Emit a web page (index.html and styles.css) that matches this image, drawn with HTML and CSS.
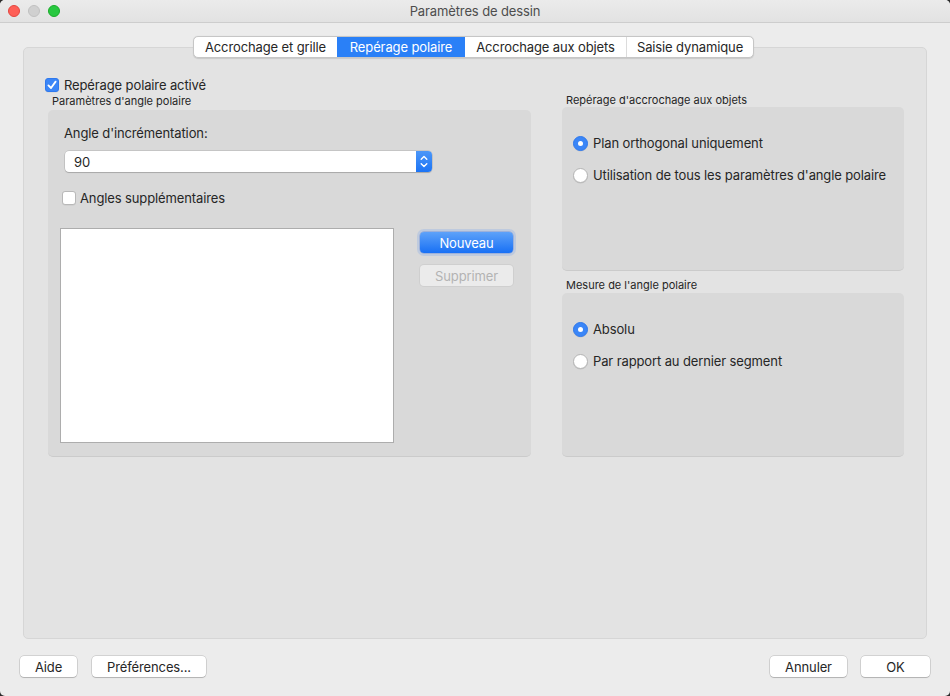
FILE: index.html
```html
<!DOCTYPE html>
<html lang="fr">
<head>
<meta charset="utf-8">
<title>Paramètres de dessin</title>
<link rel="stylesheet" href="styles.css">
</head>
<body>
<div class="window">
  <div class="titlebar">
    <div class="lights">
      <span class="light red"></span>
      <span class="light gray"></span>
      <span class="light green"></span>
    </div>
    <div class="title">Paramètres de dessin</div>
  </div>

  <div class="tabs">
    <div class="seg seg-1">Accrochage et grille</div>
    <div class="seg seg-2 active">Repérage polaire</div>
    <div class="seg seg-3">Accrochage aux objets</div>
    <div class="seg seg-4">Saisie dynamique</div>
  </div>

  <div class="tabbox">
    <label class="check-row main-check">
      <span class="checkbox checked">
        <svg viewBox="0 0 14 14" width="14" height="14"><path d="M3.4 7.4 L6 10 L10.6 3.6" fill="none" stroke="#fff" stroke-width="1.8" stroke-linecap="round" stroke-linejoin="round"/></svg>
      </span>
      <span class="check-text">Repérage polaire activé</span>
    </label>

    <div class="columns">
      <div class="col-left">
        <div class="group-label">Paramètres d'angle polaire</div>
        <div class="group group-left">
          <div class="field-label">Angle d'incrémentation:</div>
          <div class="combo">
            <span class="combo-value">90</span>
            <span class="stepper">
              <svg viewBox="0 0 16 21" width="16" height="21"><path d="M5.2 8.2 L8 5.4 L10.8 8.2" fill="none" stroke="#fff" stroke-width="1.4" stroke-linecap="round" stroke-linejoin="round"/><path d="M5.2 12.8 L8 15.6 L10.8 12.8" fill="none" stroke="#fff" stroke-width="1.4" stroke-linecap="round" stroke-linejoin="round"/></svg>
            </span>
          </div>
          <label class="check-row extra-check">
            <span class="checkbox"></span>
            <span class="check-text">Angles supplémentaires</span>
          </label>
          <div class="list-row">
            <div class="listbox"></div>
            <div class="list-buttons">
              <button class="btn btn-primary">Nouveau</button>
              <button class="btn btn-disabled" disabled>Supprimer</button>
            </div>
          </div>
        </div>
      </div>

      <div class="col-right">
        <div class="group-label">Repérage d'accrochage aux objets</div>
        <div class="group group-right">
          <label class="radio-row"><span class="radio on"></span><span>Plan orthogonal uniquement</span></label>
          <label class="radio-row"><span class="radio"></span><span>Utilisation de tous les paramètres d'angle polaire</span></label>
        </div>
        <div class="group-label label-second">Mesure de l'angle polaire</div>
        <div class="group group-right">
          <label class="radio-row"><span class="radio on"></span><span>Absolu</span></label>
          <label class="radio-row"><span class="radio"></span><span>Par rapport au dernier segment</span></label>
        </div>
      </div>
    </div>
  </div>

  <div class="footer">
    <div class="footer-left">
      <button class="btn btn-foot btn-aide">Aide</button>
      <button class="btn btn-foot btn-pref">Préférences...</button>
    </div>
    <div class="footer-right">
      <button class="btn btn-foot btn-cancel">Annuler</button>
      <button class="btn btn-foot btn-ok">OK</button>
    </div>
  </div>
</div>
</body>
</html>
```

FILE: styles.css
```css
* { box-sizing: border-box; }

html, body {
  margin: 0;
  padding: 0;
  background: #2b2b2b;
}

body {
  width: 950px;
  height: 696px;
  font-family: "Inter", "Liberation Sans", sans-serif;
  font-size: 13px;
  letter-spacing: -0.12px;
  color: #262626;
  overflow: hidden;
}

.window {
  width: 950px;
  height: 696px;
  background: #ececec;
  border-radius: 5px;
  display: flex;
  flex-direction: column;
  overflow: hidden;
}

.titlebar {
  height: 23px;
  flex: none;
  background: linear-gradient(#ebebeb, #e2e2e2);
  border-bottom: 1px solid #cdcdcd;
  display: flex;
  align-items: center;
  position: relative;
}

.lights {
  display: flex;
  gap: 8px;
  padding-left: 8px;
}

.light {
  width: 12px;
  height: 12px;
  border-radius: 50%;
}
.light.red { background: #fe5f57; border: 0.5px solid #e2463f; }
.light.gray { background: #d0d0d0; border: 0.5px solid #c0c0c0; }
.light.green { background: #28c840; border: 0.5px solid #1aab29; }

.title {
  position: absolute;
  left: 0;
  right: 0;
  top: 0;
  line-height: 22px;
  text-align: center;
  color: #4d4d4d;
  font-size: 13px;
}

/* Segmented tabs */
.tabs {
  position: relative;
  z-index: 1;
  align-self: flex-start;
  margin: 13px 0 0 193px;
  display: flex;
  height: 22px;
  background: #fff;
  border: 1px solid #c6c6c6;
  border-radius: 5px;
  box-shadow: 0 0.5px 1px rgba(0,0,0,0.12);
  overflow: hidden;
}

.seg {
  line-height: 20px;
  text-align: center;
  color: #262626;
  border-left: 1px solid #dcdcdc;
}
.seg-1 { width: 143px; border-left: none; }
.seg-2 { width: 127px; }
.seg-3 { width: 162px; }
.seg-4 { width: 127px; }
.seg.active {
  background: #2a80f7;
  color: #fff;
  border-left-color: #2a80f7;
}
.seg.active + .seg { border-left-color: #2a80f7; }

/* Tab box */
.tabbox {
  margin: -11px 23px 0 23px;
  height: 592px;
  flex: none;
  background: #e3e3e3;
  border: 1px solid #d6d6d6;
  border-radius: 5px;
  padding: 29px 22px 0 21px;
}

.check-row {
  display: flex;
  align-items: center;
  gap: 5px;
  line-height: 16px;
}

.checkbox {
  width: 14px;
  height: 14px;
  border-radius: 3px;
  background: #fff;
  border: 1px solid #b8b8b8;
  box-shadow: 0 0.5px 0.5px rgba(0,0,0,0.08);
  flex: none;
  display: flex;
}
.checkbox.checked {
  background: #3b86f7;
  border-color: #2f79ee;
}
.checkbox svg { margin: -1px; }

.main-check { height: 16px; }

.columns {
  display: flex;
  gap: 31px;
  padding-left: 3px;
  margin-top: 0;
}

.group-label {
  font-size: 11px;
  line-height: 14px;
  color: #262626;
  padding-left: 4px;
  letter-spacing: 0;
}

.col-left { width: 483px; flex: none; padding-top: 1px; }
.col-right { width: 342px; flex: none; padding-top: 0; }

.group {
  background: #d9d9d9;
  border-radius: 5px;
  border-bottom: 1px solid #cbcbcb;
}

.group-left {
  height: 347px;
  margin-top: 2px;
  padding: 15px 0 0 16px;
}

.field-label { line-height: 16px; }

.combo {
  margin: 10px 0 0 1px;
  width: 367px;
  height: 21px;
  background: #fff;
  border-radius: 4px;
  box-shadow: 0 0 0 0.5px rgba(0,0,0,0.18), 0 1px 1px rgba(0,0,0,0.15);
  display: flex;
  align-items: center;
  justify-content: space-between;
}
.combo-value { padding-left: 9px; }
.stepper {
  width: 16px;
  height: 21px;
  background: linear-gradient(#4c97f8, #1c74f5);
  border-radius: 0 4px 4px 0;
  display: flex;
}

.extra-check {
  margin: 18px 0 0 -2px;
  gap: 4px;
}

.list-row {
  display: flex;
  margin: 22px 0 0 -4px;
  gap: 26px;
}

.listbox {
  width: 334px;
  height: 215px;
  background: #fff;
  border: 1px solid #adadad;
}

.list-buttons {
  display: flex;
  flex-direction: column;
  gap: 12px;
  padding-top: 4px;
}

.btn {
  font-family: inherit;
  font-size: 13px;
  letter-spacing: -0.12px;
  height: 22px;
  padding: 0;
  border-radius: 4px;
  background: #fff;
  border: none;
  color: #262626;
  box-shadow: 0 0 0 0.5px rgba(0,0,0,0.22), 0 1px 1px rgba(0,0,0,0.15);
}

.btn-primary {
  width: 93px;
  height: 21px;
  color: #fff;
  background: linear-gradient(#5ea2f9, #1870f5);
  box-shadow: 0 0 0 0.5px rgba(0,60,200,0.35), 0 0 0 3px rgba(110,160,240,0.25);
}

.btn-disabled {
  width: 93px;
  height: 21px;
  color: #b3b3b3;
  background: #ebebeb;
  box-shadow: 0 0 0 1px #cfcfcf;
}

.group-right {
  height: 164px;
  margin-top: 0;
  padding: 29px 0 0 11px;
  display: flex;
  flex-direction: column;
  gap: 17px;
}

.label-second { margin-top: 7px; }
.label-second + .group { margin-top: 1px; }

.radio-row {
  display: flex;
  align-items: center;
  gap: 5px;
  line-height: 15px;
  height: 15px;
}

.radio {
  width: 15px;
  height: 15px;
  border-radius: 50%;
  background: #fff;
  border: 1px solid #b5b5b5;
  box-shadow: 0 0.5px 0.5px rgba(0,0,0,0.1);
  flex: none;
  display: flex;
  align-items: center;
  justify-content: center;
}
.radio.on {
  background: #3b86f7;
  border-color: #2f79ee;
}
.radio.on::after {
  content: "";
  width: 5px;
  height: 5px;
  border-radius: 50%;
  background: #fff;
}

/* Footer */
.footer {
  display: flex;
  justify-content: space-between;
  padding: 17px 20px 0 20px;
}
.footer-left, .footer-right {
  display: flex;
  gap: 14px;
}
.footer-left { gap: 15px; }
.btn-foot { height: 21px; }
.btn-aide { width: 57px; }
.btn-pref { width: 114px; }
.btn-cancel { width: 77px; }
.btn-ok { width: 69px; }
```
